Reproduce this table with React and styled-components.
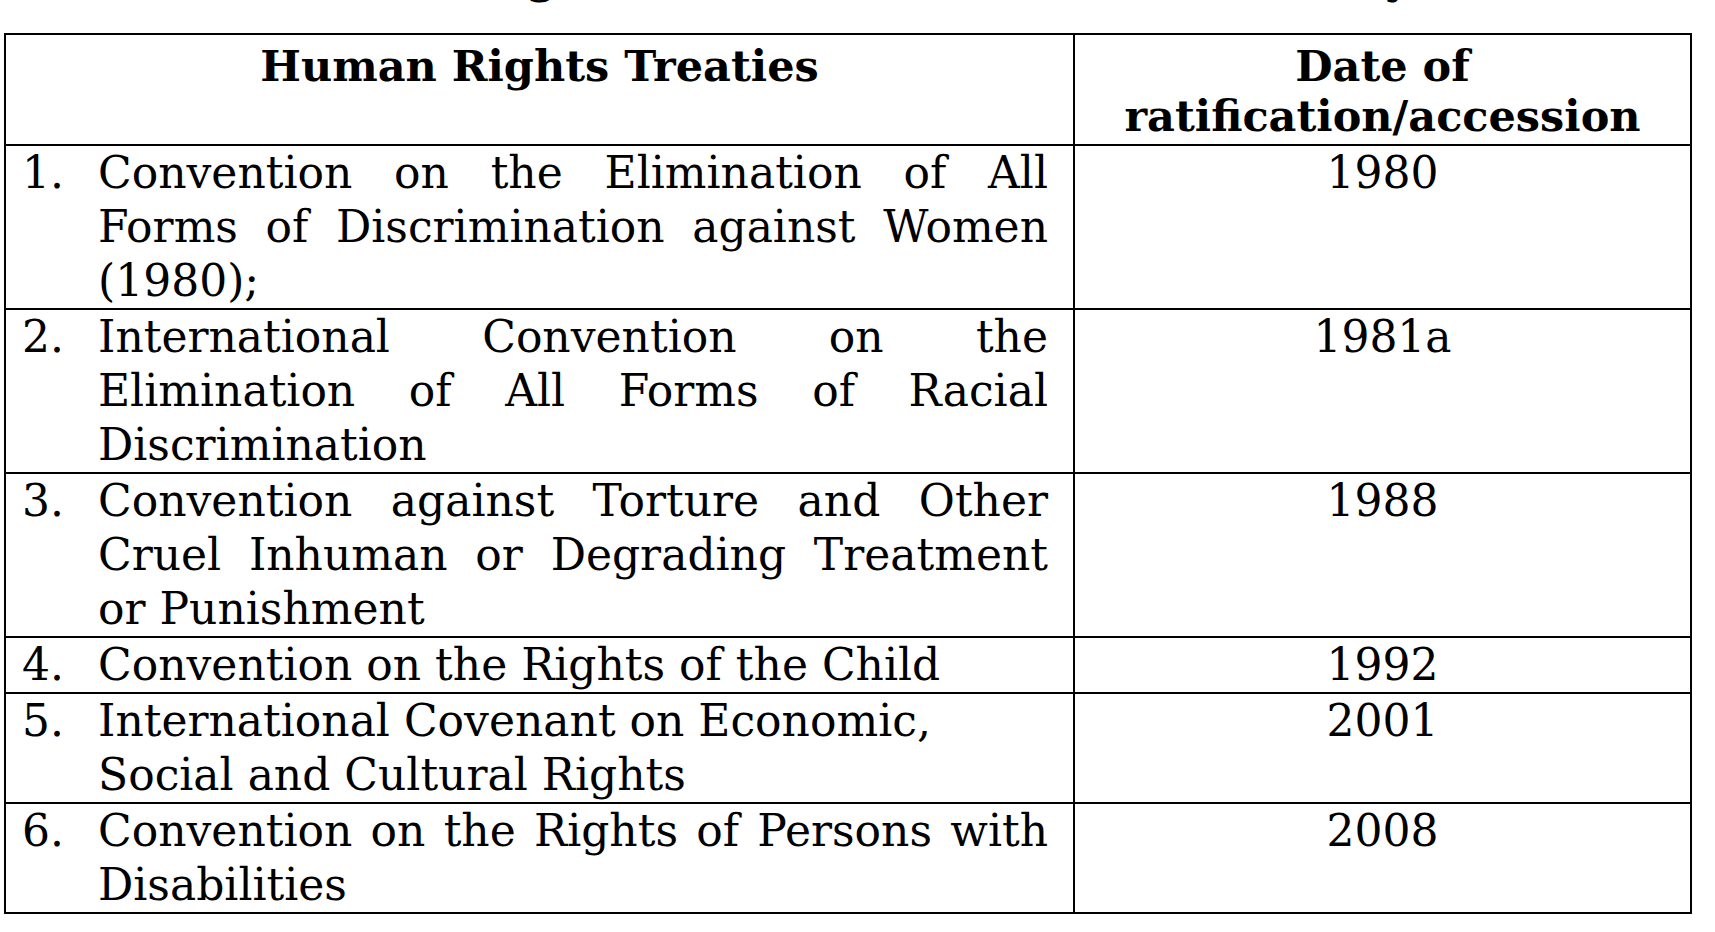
import React from "react";
import styled, { createGlobalStyle } from "styled-components";

const treaties = [
  {
    no: "1.",
    lines: [
      { text: "Convention on the Elimination of All", justify: true },
      { text: "Forms of Discrimination against Women", justify: true },
      { text: "(1980);" },
    ],
    date: "1980",
  },
  {
    no: "2.",
    lines: [
      { text: "International Convention on the", justify: true },
      { text: "Elimination of All Forms of Racial", justify: true },
      { text: "Discrimination" },
    ],
    date: "1981a",
  },
  {
    no: "3.",
    lines: [
      { text: "Convention against Torture and Other", justify: true },
      { text: "Cruel Inhuman or Degrading Treatment", justify: true },
      { text: "or Punishment" },
    ],
    date: "1988",
  },
  {
    no: "4.",
    lines: [{ text: "Convention on the Rights of the Child" }],
    date: "1992",
  },
  {
    no: "5.",
    lines: [
      { text: "International Covenant on Economic," },
      { text: "Social and Cultural Rights" },
    ],
    date: "2001",
  },
  {
    no: "6.",
    lines: [
      { text: "Convention on the Rights of Persons with", justify: true },
      { text: "Disabilities" },
    ],
    date: "2008",
  },
];

function App() {
  return (
    <Page>
      <GlobalStyle />
      <Heading>Table 3: Human Rights Treaties Ratified, Acceded to by the State</Heading>

      <Table>
        <colgroup>
          <col style={{ width: 1069 }} />
          <col />
        </colgroup>
        <thead>
          <tr>
            <HeadCell>Human Rights Treaties</HeadCell>
            <HeadCell>
              Date of
              <br />
              ratification/accession
            </HeadCell>
          </tr>
        </thead>
        <tbody>
          {treaties.map((t) => (
            <tr key={t.no}>
              <Cell>
                <Item>
                  <Num>{t.no}</Num>
                  <Lines>
                    {t.lines.map((l, i) => (
                      <Line key={i} $justify={l.justify}>
                        {l.text}
                      </Line>
                    ))}
                  </Lines>
                </Item>
              </Cell>
              <DateCell>{t.date}</DateCell>
            </tr>
          ))}
        </tbody>
      </Table>
    </Page>
  );
}

const GlobalStyle = createGlobalStyle`
  html, body {
    margin: 0;
    padding: 0;
    background: #fff;
  }
  body {
    font-family: "DejaVu Serif", "Liberation Serif", serif;
    color: #000;
  }
`;

const Page = styled.div`
  width: 1715px;
  height: 932px;
  overflow: hidden;
  padding-left: 4px;
  box-sizing: border-box;
`;

// 위쪽이 잘린 제목줄
const Heading = styled.h2`
  margin: -44px 0 33px;
  padding-left: 74px;
  font-size: 43px;
  line-height: 44px;
  font-weight: 700;
  white-space: nowrap;
`;

const Table = styled.table`
  width: 1688px;
  table-layout: fixed;
  border-collapse: collapse;
  border: 2px solid #000;
`;

const HeadCell = styled.th`
  border: 2px solid #000;
  padding: 6px 0 3px;
  vertical-align: top;
  text-align: center;
  font-size: 43px;
  line-height: 50px;
  font-weight: 700;
`;

const Cell = styled.td`
  border: 2px solid #000;
  padding: 0 25px 0 16px;
  vertical-align: top;
  font-size: 44px;
  line-height: 54px;
`;

const DateCell = styled(Cell)`
  padding: 0;
  text-align: center;
`;

const Item = styled.div`
  display: flex;
`;

const Num = styled.span`
  flex: 0 0 76px;
`;

const Lines = styled.div`
  flex: 1;
  min-width: 0;
`;

const Line = styled.span`
  display: block;
  white-space: nowrap;
  text-align: ${(p) => (p.$justify ? "justify" : "left")};
  text-align-last: ${(p) => (p.$justify ? "justify" : "left")};
`;

export default App;
